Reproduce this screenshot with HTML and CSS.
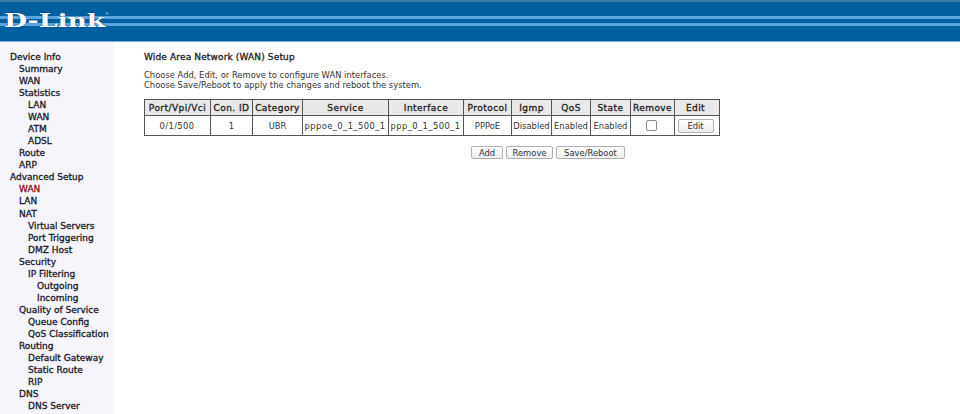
FILE: index.html
```html
<!DOCTYPE html>
<html lang="en">
<head>
<meta charset="utf-8">
<title>D-Link WAN Setup</title>
<link rel="stylesheet" href="styles.css">
</head>
<body>
<header class="banner">
  <div class="stripes"><span class="stripe"></span><span class="stripe"></span></div>
  <div class="logo">D-Link<span class="reg">®</span></div>
</header>
<div class="layout">
  <nav class="menu">
    <a class="l0">Device Info</a>
    <a class="l1">Summary</a>
    <a class="l1">WAN</a>
    <a class="l1">Statistics</a>
    <a class="l2">LAN</a>
    <a class="l2">WAN</a>
    <a class="l2">ATM</a>
    <a class="l2">ADSL</a>
    <a class="l1">Route</a>
    <a class="l1">ARP</a>
    <a class="l0">Advanced Setup</a>
    <a class="l1 active">WAN</a>
    <a class="l1">LAN</a>
    <a class="l1">NAT</a>
    <a class="l2">Virtual Servers</a>
    <a class="l2">Port Triggering</a>
    <a class="l2">DMZ Host</a>
    <a class="l1">Security</a>
    <a class="l2">IP Filtering</a>
    <a class="l3">Outgoing</a>
    <a class="l3">Incoming</a>
    <a class="l1">Quality of Service</a>
    <a class="l2">Queue Config</a>
    <a class="l2">QoS Classification</a>
    <a class="l1">Routing</a>
    <a class="l2">Default Gateway</a>
    <a class="l2">Static Route</a>
    <a class="l2">RIP</a>
    <a class="l1">DNS</a>
    <a class="l2">DNS Server</a>
  </nav>
  <main class="content">
    <h1 class="title">Wide Area Network (WAN) Setup</h1>
    <p class="intro">Choose Add, Edit, or Remove to configure WAN interfaces.<br>Choose Save/Reboot to apply the changes and reboot the system.</p>
    <table class="wan">
      <colgroup>
        <col class="c1"><col class="c2"><col class="c3"><col class="c4"><col class="c5"><col class="c6"><col class="c7"><col class="c8"><col class="c9"><col class="c10"><col class="c11">
      </colgroup>
      <tr>
        <th>Port/Vpi/Vci</th><th>Con. ID</th><th>Category</th><th>Service</th><th>Interface</th><th>Protocol</th><th>Igmp</th><th>QoS</th><th>State</th><th>Remove</th><th class="edit-col">Edit</th>
      </tr>
      <tr>
        <td class="wide">0/1/500</td><td>1</td><td>UBR</td><td class="wide">pppoe_0_1_500_1</td><td class="wide">ppp_0_1_500_1</td><td>PPPoE</td><td>Disabled</td><td>Enabled</td><td>Enabled</td><td class="check-col"><span class="check"></span></td><td class="edit-col"><button class="btn btn-edit" type="button">Edit</button></td>
      </tr>
    </table>
    <div class="actions">
      <button class="btn btn-add" type="button">Add</button>
      <button class="btn btn-remove" type="button">Remove</button>
      <button class="btn btn-save" type="button">Save/Reboot</button>
    </div>
  </main>
</div>
</body>
</html>
```
FILE: styles.css
```css
html, body { margin: 0; padding: 0; height: 414px; overflow: hidden; background: #fff; }
body { font-family: "DejaVu Sans", Verdana, sans-serif; font-size: 8.4px; color: #333; }

.banner { height: 42px; background: #005f9e; border-top: 2px solid #3b7ba6; border-bottom: 1px solid #7fb0cf; box-sizing: border-box; position: relative; }
.stripes { position: absolute; left: 0; right: 0; top: 14px; display: flex; flex-direction: column; gap: 4px; }
.stripe { height: 3px; background: #5aa6de; }
.logo { position: absolute; left: 4px; top: 9px; font-family: "DejaVu Serif", serif; font-weight: 700; font-size: 18px; line-height: 20px; color: #fff; transform: scaleX(1.48); transform-origin: left center; white-space: nowrap; text-shadow: 0 0 1px #0a3f6e; }
.reg { position: absolute; left: 100%; top: 1px; font-size: 3px; line-height: 4px; font-family: "Liberation Sans", sans-serif; font-weight: 400; }

.layout { display: flex; height: 372px; }
.menu { width: 114px; flex: none; background: #f5f5fb; padding-top: 9.3px; box-sizing: border-box; overflow: hidden; }
.menu a { display: block; height: 12.03px; line-height: 12px; white-space: nowrap; color: #1a1a2a; font-size: 9px; font-weight: 400; -webkit-text-stroke: .3px #1a1a2a; }
.l0 { padding-left: 10px; }
.l1 { padding-left: 19px; }
.l2 { padding-left: 28px; }
.l3 { padding-left: 37px; }
.menu a.active { color: #8c1020; -webkit-text-stroke-color: #8c1020; }

.content { flex: 1; padding: 9px 0 0 30px; }
.title { margin: 0; font-size: 9px; letter-spacing: .14px; line-height: 12px; font-weight: 400; color: #222; -webkit-text-stroke: .3px #222; }
.intro { margin: 7px 0 0; line-height: 10px; }

.wan { border-collapse: collapse; table-layout: fixed; width: 575px; margin-top: 9px; border: 1px solid #555; }
.wan th, .wan td { border: 1px solid #555; padding: 0; text-align: center; white-space: nowrap; }
.wan th { height: 15px; background: #e9e9e9; font-size: 9px; letter-spacing: .45px; font-weight: 400; -webkit-text-stroke: .3px #222; color: #222; }
.wan td { height: 19px; }
.wan td.wide { letter-spacing: .4px; padding-right: 1px; }
.wan .check-col { padding-right: 2px; }
.wan .edit-col { padding-right: 3px; }
.c1 { width: 66px; } .c2 { width: 42px; } .c3 { width: 50px; } .c4 { width: 86px; } .c5 { width: 75px; }
.c6 { width: 48px; } .c7 { width: 40px; } .c8 { width: 39px; } .c9 { width: 40px; } .c10 { width: 44px; } .c11 { width: 45px; }

.check { display: inline-block; width: 9px; height: 9px; border: 1px solid #888; border-radius: 2px; vertical-align: middle; background: #fff; }
.btn { font: 8.4px "DejaVu Sans", Verdana, sans-serif; color: #333; background: linear-gradient(#fff, #ededed); border: 1px solid #b0b0b0; border-radius: 2px; padding: 0; height: 13px; line-height: 10px; }
.btn-edit { width: 36px; height: 14px; }
.btn-add { width: 32px; }
.btn-remove { width: 47px; }
.btn-save { width: 69px; }

.actions { display: flex; justify-content: center; gap: 3px; width: 808px; margin-top: 10px; }
```
